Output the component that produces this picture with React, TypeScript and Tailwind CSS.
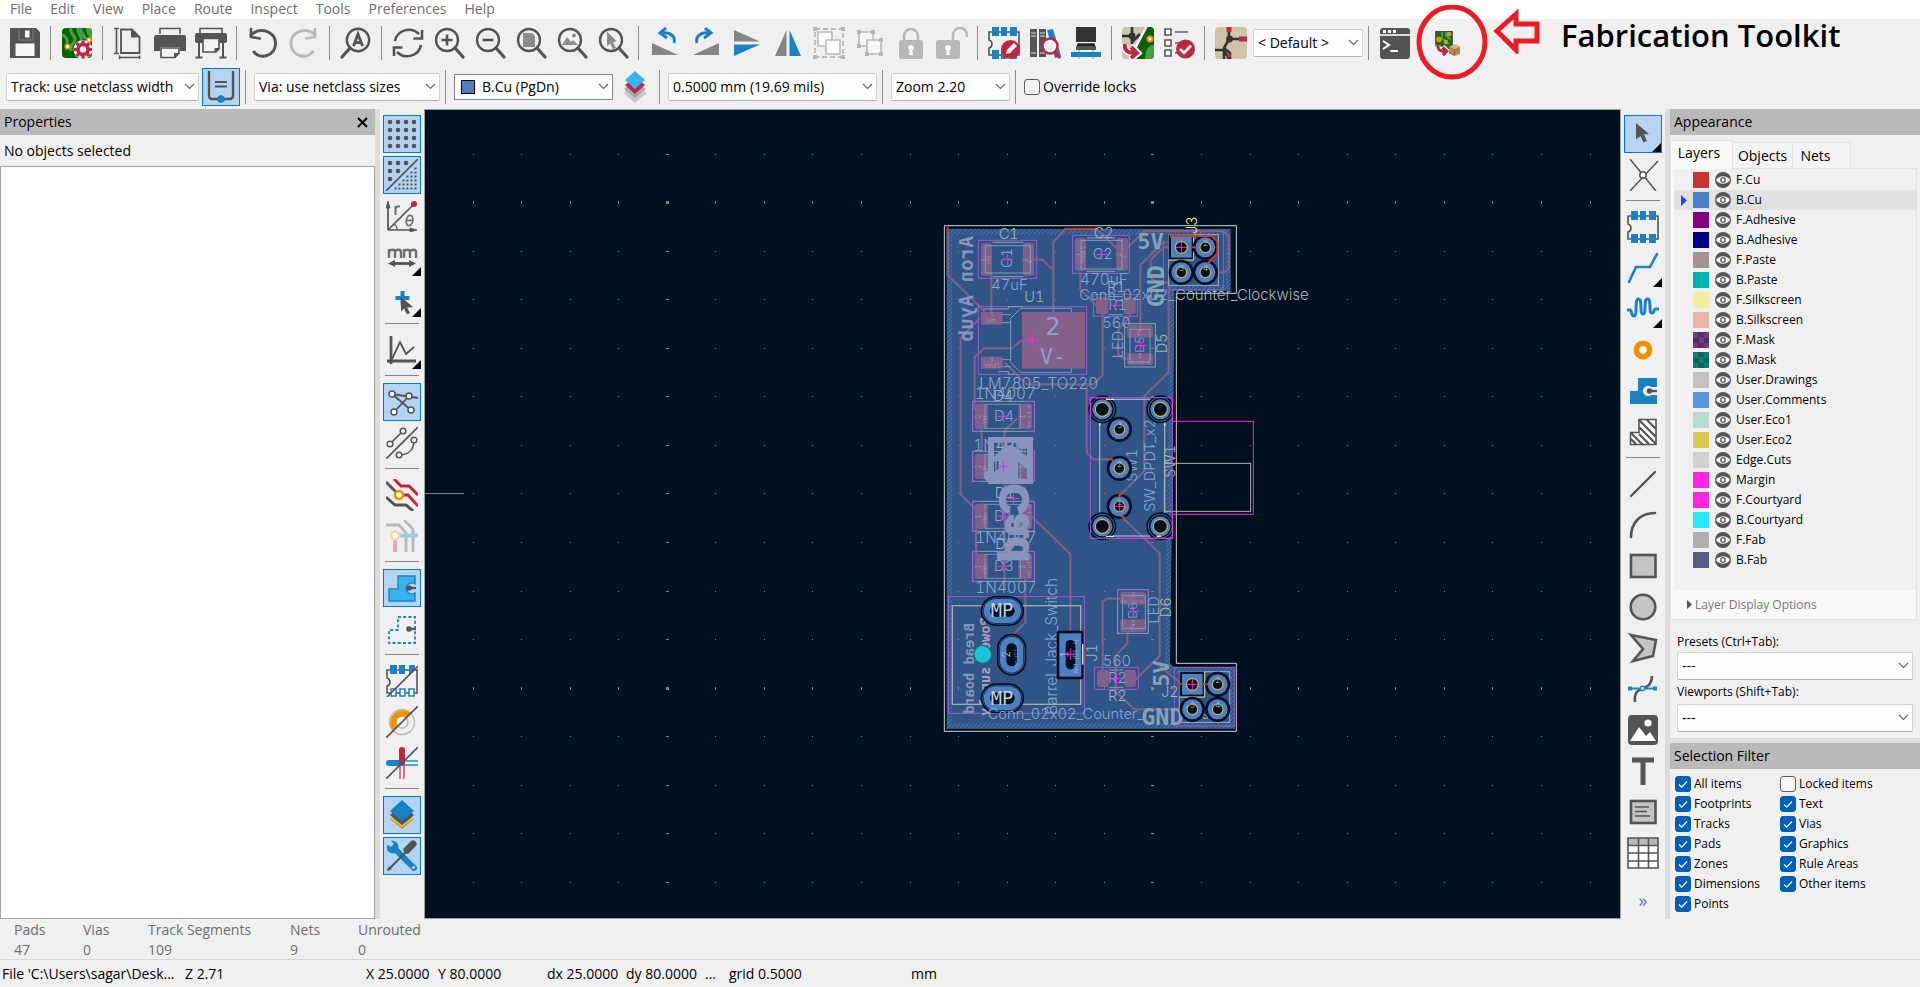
import React from "react";

type Kids = { children?: React.ReactNode };

const G = "#545454";
const B = "#1a81c4";
const R = "#bf2641";

function Icon({ children, size = 32 }: Kids & { size?: number }) {
  return (
    <svg width={size} height={size} viewBox="0 0 32 32" fill="none" aria-hidden="true" className="shrink-0">
      {children}
    </svg>
  );
}

/* ---------- top toolbar icons ---------- */

const Lens = ({ children }: Kids) => (
  <Icon>
    <circle cx="14" cy="13" r="11" stroke={G} strokeWidth="2.4" />
    <path d="M22 21l8 9" stroke={G} strokeWidth="3.2" strokeLinecap="round" />
    {children}
  </Icon>
);

const Save = () => (
  <Icon>
    <path d="M1 1h26l4 4v26H1z" fill={G} />
    <path d="M11 1h12v11H11z" fill={G} />
    <path d="M16 3.500h4.500v7H16zM6.500 16.500h19V29h-19z" fill="#f8f8f8" />
    <path d="M10 2v11h14V2" stroke="#8a8a8a" strokeWidth="0.800" />
  </Icon>
);
const BoardSetup = () => (
  <Icon>
    <rect x="1" y="1" width="30" height="30" rx="4" fill="#006400" />
    <path d="M10 1c-2 6 5 7 4 12-1 4-6 5-4 11M20 1c-2 4 4 6 4 11M1 8c4 1 6 5 5 9M17 1c-1 6 5 8 3 13" stroke="#4a9c4a" strokeWidth="3" />
    <path d="M25 1h3a3 3 0 0 1 3 3v7c-4-1-6-5-6-10z" fill="#4a9c4a" />
    <circle cx="6.500" cy="19.500" r="2.300" fill="#fff" stroke="#f29100" strokeWidth="1.600" />
    <circle cx="28" cy="13" r="2.200" fill="#fff" stroke="#f29100" strokeWidth="1.600" />
    <circle cx="22" cy="22.500" r="9.500" fill="#e8e8e8" />
    <circle cx="22" cy="22.500" r="5" stroke={R} strokeWidth="3.600" />
    <path d="M22 13.500v3M22 28.500v3M13 22.500h3M28 22.500h3M15.700 16.200l2 2M26.300 26.800l2 2M15.700 28.800l2-2M26.300 18.200l2-2" stroke={R} strokeWidth="3.200" />
  </Icon>
);
const PageSetup = () => (
  <Icon>
    <path d="M8 2.500h11l7.500 7.500V26H8z" stroke={G} strokeWidth="1.800" />
    <path d="M18 2v8.500h8z" fill={G} />
    <path d="M3.500 2v24M1 1.500h5M1 26.500h5M7 30.500h19M6.500 28.500v3.500M26.500 28.500v3.500" stroke={G} strokeWidth="1.600" />
  </Icon>
);
const Print = () => (
  <Icon>
    <path d="M6 7V1.500h20V7" stroke={G} strokeWidth="1.600" />
    <path d="M0 10a2 2 0 0 1 2-2h28a2 2 0 0 1 2 2v14h-6v-4H6v4H0z" fill={G} />
    <path d="M7 21h18v5l-4 4.500H7z" stroke={G} strokeWidth="1.600" fill="#f4f4f4" />
    <path d="M20 31v-5h6z" fill={G} />
  </Icon>
);
const Plot = () => (
  <Icon>
    <path d="M5 6V1.500h22V6" stroke={G} strokeWidth="1.600" />
    <path d="M0 8a2 2 0 0 1 2-2h28a2 2 0 0 1 2 2v6a2 2 0 0 1-2 2H2a2 2 0 0 1-2-2z" fill={G} />
    <path d="M8 11.500h16V22l-3 3H8z" fill="#f4f4f4" stroke={G} strokeWidth="1.600" />
    <path d="M19.500 26v-5H25z" fill={G} />
    <path d="M4 16v14M28 16v14M0.500 30.500h7M24.500 30.500h7" stroke={G} strokeWidth="2" />
  </Icon>
);
const Undo = () => (
  <Icon>
    <path d="M4 8C14-1 29 5 28.500 17 28 29 13 33 7 25" stroke={G} strokeWidth="3" strokeLinecap="round" />
    <path d="M4 2v8l9 1.500" stroke={G} strokeWidth="2.600" strokeLinecap="round" />
  </Icon>
);
const Redo = () => (
  <Icon>
    <path d="M27 8C17-1 2.500 5 3 17c.5 12 15.500 16 21.500 8" stroke="#bababa" strokeWidth="3" strokeLinecap="round" />
    <path d="M27 2v8l-9 1.500" stroke="#bababa" strokeWidth="2.600" strokeLinecap="round" />
  </Icon>
);
const Find = () => (
  <Icon>
    <circle cx="18" cy="13" r="11.200" stroke={G} strokeWidth="2.400" />
    <path d="M10 21l-8 9" stroke={G} strokeWidth="3.200" strokeLinecap="round" />
    <path d="M13.500 19L18 7l4.500 12M15 15.500h6" stroke={G} strokeWidth="2.800" />
  </Icon>
);
const Refresh = () => (
  <Icon>
    <path d="M3 14C5 3 19-1 27 7" stroke={G} strokeWidth="2.600" />
    <path d="M30 3v8.500h-8.500" stroke={G} strokeWidth="2.600" />
    <path d="M29 18c-2 11-16 15-24 7" stroke={G} strokeWidth="2.600" />
    <path d="M2 29v-8.500h8.500" stroke={G} strokeWidth="2.600" />
  </Icon>
);
const ZoomIn = () => <Lens><path d="M14 7.500v11M8.500 13h11" stroke={G} strokeWidth="2.600" /></Lens>;
const ZoomOut = () => <Lens><path d="M8.500 13h11" stroke={G} strokeWidth="2.600" /></Lens>;
const ZoomFit = () => <Lens><path d="M8 6h9l3 3v11H8z" fill="#8c8c8c" /></Lens>;
const ZoomObj = () => (
  <Lens>
    <path d="M6 18l5-8 4 5 2-2 5 5z" fill="#8c8c8c" />
    <circle cx="18" cy="8.500" r="2" fill="#8c8c8c" />
  </Lens>
);
const ZoomSel = () => <Lens><path d="M10 4.500l10 10-4 .5 3 6-3 1.500-3-6-3 3z" fill="#8c8c8c" /></Lens>;

const RotCCW = () => (
  <Icon>
    <path d="M3 16l26 12H3z" fill="#858585" />
    <path d="M25 16c2-7-4-11-12-10" stroke={B} strokeWidth="3" />
    <path d="M17 1l-6 5 7 5" stroke={B} strokeWidth="3" />
  </Icon>
);
const RotCW = () => (
  <Icon>
    <path d="M29 16L3 28h26z" fill="#858585" />
    <path d="M7 16C5 9 11 5 19 6" stroke={B} strokeWidth="3" />
    <path d="M15 1l6 5-7 5" stroke={B} strokeWidth="3" />
  </Icon>
);
const FlipV = () => (
  <Icon>
    <path d="M3 3l26 11.500H3z" fill="#858585" />
    <path d="M3 29l26-11.500H3z" fill={B} />
  </Icon>
);
const FlipH = () => (
  <Icon>
    <path d="M14.500 3v26H3z" fill="#858585" />
    <path d="M17.500 3v26H29z" fill={B} />
  </Icon>
);
const Group = () => (
  <Icon>
    <rect x="2" y="2" width="28" height="28" stroke="#bababa" strokeWidth="1.800" strokeDasharray="5 3" />
    <path d="M0 0h4v4H0zM28 0h4v4h-4zM0 28h4v4H0zM28 28h4v4h-4z" fill="#b5b5b5" />
    <path d="M5 5h14v14H5z" fill="#fff" stroke="#bababa" strokeWidth="1.600" />
    <path d="M13 13h14v14H13z" fill="#fff" stroke="#bababa" strokeWidth="1.600" />
  </Icon>
);
const Ungroup = () => (
  <Icon>
    <path d="M5 5h14v14H5z" fill="#f7f7f7" stroke="#bababa" strokeWidth="1.600" />
    <path d="M13 13h14v14H13z" fill="#f7f7f7" stroke="#bababa" strokeWidth="1.600" />
    <path d="M3 3h4v4H3zM17 3h4v4h-4zM3 17h4v4H3zM25 11h4v4h-4zM11 25h4v4h-4zM25 25h4v4h-4z" fill="#b5b5b5" />
  </Icon>
);
const Lock = () => (
  <Icon>
    <path d="M9 14V9a7 7 0 0 1 14 0v5" stroke="#b8b8b8" strokeWidth="2.600" />
    <rect x="4" y="13" width="24" height="19" rx="2.500" fill="#b8b8b8" />
    <circle cx="16" cy="21" r="2.800" fill="#fff" />
    <path d="M15 22h2l1 6h-4z" fill="#fff" />
  </Icon>
);
const Unlock = () => (
  <Icon>
    <path d="M17 14V8a7 7 0 0 1 14 0v2" stroke="#b8b8b8" strokeWidth="2.600" />
    <rect x="0" y="13" width="24" height="19" rx="2.500" fill="#b8b8b8" />
    <circle cx="12" cy="21" r="2.800" fill="#fff" />
    <path d="M11 22h2l1 6h-4z" fill="#fff" />
  </Icon>
);

const ChipBody = () => (
  <>
    <path d="M1 5h30v23H1v-7c4-1 4-7 0-8z" stroke={G} strokeWidth="1.600" />
    <path d="M4 0h7v9H4zM13 0h6v9h-6zM22 0h7v9h-7zM4 23h7v9H4zM13 23h6v9h-6zM22 23h7v9h-7z" fill={B} />
  </>
);
const FpEdit = () => (
  <Icon>
    <ChipBody />
    <circle cx="22.500" cy="22.500" r="9.500" fill={R} />
    <path d="M18 27l1-4 7-7 3 3-7 7z" fill="#fff" />
  </Icon>
);
const FpLib = () => (
  <Icon>
    <path d="M1 2h7v28H1zM10 2h7v28h-7z" fill={G} />
    <path d="M2 6h5M2 9h5M2 26h5M11 6h5M11 9h5M11 26h5" stroke="#ddd" strokeWidth="1.200" />
    <path d="M18 3l6-1 8 27-6 2z" fill={B} />
    <circle cx="21" cy="19" r="7.500" fill="#eaf2f8" stroke={R} strokeWidth="2.400" />
    <path d="M26 25l5 6" stroke={R} strokeWidth="3.200" />
  </Icon>
);
const View3d = () => (
  <Icon>
    <path d="M6 0h20v15H6z" fill="#333" />
    <path d="M7.500 16h17v4h-17zM6 19h20v4H6z" fill={G} />
    <path d="M9 23v9M23 23v9" stroke="#c4c4c4" strokeWidth="2" />
    <path d="M1 25h30v5H1z" fill={B} />
    <path d="M7 18h18" stroke="#222" strokeWidth="2" />
  </Icon>
);
const UpdatePcb = () => (
  <Icon>
    <rect x="0" y="0" width="32" height="32" rx="4" fill="#cfc3aa" />
    <path d="M28 0a4 4 0 0 1 4 4v24a4 4 0 0 1-4 4H12L24 0z" fill="#006400" />
    <path d="M32 18c-6 0-9 6-9 14h5a4 4 0 0 0 4-4z" fill="#4a9c4a" />
    <path d="M0 9h10M10 0v17M10 15l8-8" stroke="#333" strokeWidth="2.600" />
    <circle cx="10" cy="9" r="3.400" fill="#333" />
    <path d="M25 0L8 32" stroke="#fff" strokeWidth="3.600" />
    <path d="M26.500 0L9.500 32" stroke="#333" strokeWidth="1.400" />
    <circle cx="28" cy="12" r="2.600" fill="#fff" stroke="#f29100" strokeWidth="2" />
    <path d="M3 17c-1 7 3 9 10 9M9 19l7 7-7 6" stroke="#fff" strokeWidth="6.500" />
    <path d="M3 17c-1 7 3 9 11 9M9 20l6 6-6 5" stroke={R} strokeWidth="4" />
  </Icon>
);
const Drc = () => (
  <Icon>
    <path d="M2 2h6v6H2zM2 13h6v6H2zM2 23h6v6H2z" fill="#fff" stroke={G} strokeWidth="1.600" />
    <path d="M12 5h13M12 16h8M12 26h4" stroke="#858585" strokeWidth="2" />
    <circle cx="22.500" cy="22" r="9.500" fill={R} />
    <path d="M17 22l4 4 7-7.500" stroke="#fff" strokeWidth="2.600" />
  </Icon>
);
const Schematic = () => (
  <Icon>
    <rect x="0" y="0" width="32" height="32" rx="4" fill="#cfc3aa" />
    <path d="M14 4v8M14 12h12M14 12l-5 9v11M0 23h9l5 9M9 21l6 5v6" stroke="#333" strokeWidth="2.600" />
    <circle cx="14.500" cy="12" r="3.400" fill="#333" />
    <path d="M11.500 0h5v5h-5zM24 9.500h8v5h-8zM12 27h4v3h-4z" fill={R} />
  </Icon>
);
const Console = () => (
  <Icon>
    <rect x="1" y="1" width="30" height="31" rx="3" fill={G} />
    <path d="M1 8h30" stroke="#fff" strokeWidth="1.600" />
    <path d="M4 3h3v3H4zM9 3h3v3H9zM14 3h3v3h-3z" fill="#fff" />
    <path d="M4 14l6 4-6 4M11.500 24h7.500" stroke="#fff" strokeWidth="2" />
  </Icon>
);
const Fab = () => (
  <Icon size={25}>
    <rect x="1" y="0" width="21" height="24" rx="1" fill="#126b1c" stroke="#444" strokeWidth="1.600" />
    <path d="M9 1v8c0 4 8 2 8 8M14 1v5l6 5" stroke="#47a047" strokeWidth="2.400" />
    <circle cx="5" cy="11" r="3.500" fill="#f29100" />
    <circle cx="18" cy="4" r="3" fill="#e0901a" />
    <circle cx="14" cy="14" r="2.800" fill="#f29100" />
    <path d="M0 20h12l8 12H0z" fill="#f0f0f0" />
    <path d="M4 18c-1 7 3 8 10 8M10 20l6 6-6 6" stroke="#f0f0f0" strokeWidth="6" />
    <path d="M4 18c-1 7 3 8 10 8M10 21l5 5-5 5" stroke={R} strokeWidth="4" />
    <path d="M18 20l8-3 6 3v9l-7 3-7-3z" fill="#b8834a" />
    <path d="M18 20l8-3 6 3-7 3z" fill="#dcb27c" />
    <path d="M25 23v9" stroke="#8f6230" strokeWidth="1" />
  </Icon>
);
const TrackPos = () => (
  <Icon>
    <path d="M4 0v25a3 3 0 0 0 3 3h18a3 3 0 0 0 3-3V0" stroke={G} strokeWidth="2.400" />
    <path d="M10 11h12M10 15.500h12" stroke={G} strokeWidth="1.800" />
    <circle cx="16" cy="28" r="3.800" fill={B} />
  </Icon>
);
const LayerPair = () => (
  <Icon>
    <path d="M16 13l12 9-12 10L4 22z" fill="#c9c9c9" />
    <path d="M16 10l11 8-11 9-11-9z" fill="#a8a8a8" />
    <path d="M16 6l10 8-10 9-10-9z" fill={R} />
    <path d="M16 0l10 9-10 9L6 9z" fill="#39b4ea" />
  </Icon>
);

/* ---------- side toolbar icons ---------- */

const gridDots = (n: number) => Array.from({ length: n }, (_, i) => i);

const GridDots = () => (
  <Icon>
    {gridDots(4).map((r) => gridDots(4).map((c) => <circle key={`${r}-${c}`} cx={4 + c * 8} cy={4 + r * 8} r="2.300" fill={G} />))}
  </Icon>
);
const GridOverride = () => (
  <Icon>
    {[[4, 4], [12, 4], [20, 4], [4, 12], [12, 12], [4, 20]].map(([x, y]) => <circle key={`${x}-${y}`} cx={x} cy={y} r="2.300" fill={G} />)}
    <path d="M0 32L32 0" stroke={G} strokeWidth="1.600" />
    {gridDots(6).map((r) => gridDots(r + 1).map((c) => <rect key={`${r}-${c}`} x={28.500 - c * 4} y={8.500 + r * 4} width="2" height="2" fill={G} />))}
  </Icon>
);
const Polar = () => (
  <Icon>
    <path d="M2 30V4M2 30h26M2 30L27 5" stroke={G} strokeWidth="1.700" />
    <path d="M0 8l2-7 2 7zM24 28l7 2-7 2z" fill={G} stroke={G} strokeWidth="0.800" />
    <path d="M8 24c2 1 3 3 3 6" stroke={G} strokeWidth="1.200" />
    <circle cx="28" cy="4" r="3" fill={R} />
    <path d="M9.500 6v9M9.500 10c0-3 2-4 4.500-3.500" stroke="#707070" strokeWidth="2" />
    <ellipse cx="23.500" cy="20.500" rx="3.200" ry="5.200" stroke="#707070" strokeWidth="1.800" transform="rotate(12 23.500 20.500)" />
    <path d="M20.500 20.500h6" stroke="#707070" strokeWidth="1.600" />
  </Icon>
);
const Mm = () => (
  <Icon>
    <path d="M3 17V8M3 11c1-3 6-3 6 0v6M9 11c1-3 6-3 6 0v6M18 17V8M18 11c1-3 6-3 6 0v6M24 11c1-3 6-3 6 0v6" stroke="#707070" strokeWidth="2.400" />
    <path d="M7 22.500h18" stroke={G} strokeWidth="2.800" />
    <path d="M2 22.500l7-3.500v7zM30 22.500l-7-3.500v7z" fill={G} />
  </Icon>
);
const CursorPlus = () => (
  <Icon>
    <path d="M16.500 9v14M9.500 16h14" stroke={B} strokeWidth="4" />
    <path d="M15 15l12 10-6 .5 3 5.500-3 1.500-3-6-3 3z" fill={G} />
  </Icon>
);
const Ruler = () => (
  <Icon>
    <path d="M5 2v28M1 27h29" stroke={G} strokeWidth="2.800" />
    <path d="M5 27l9-19 6 12 8-7" stroke={G} strokeWidth="1.800" />
  </Icon>
);
const Ratsnest = () => (
  <Icon>
    <path d="M6 8l26 4M6 8l19 16M23 10L8 26" stroke={G} strokeWidth="1.800" />
    {[[6, 8], [23, 10], [25, 24], [8, 26]].map(([x, y]) => <circle key={`${x}-${y}`} cx={x} cy={y} r="3" fill="#fff" stroke={G} strokeWidth="1.500" />)}
  </Icon>
);
const CurvedRats = () => (
  <Icon>
    <path d="M0 32L32 0M4 17L17 4M13 28c9 0 15-5 15-15" stroke={G} strokeWidth="1.600" />
    {[[4, 17], [17, 4], [13, 28], [28, 13]].map(([x, y]) => <circle key={`${x}-${y}`} cx={x} cy={y} r="2.800" fill="#fff" stroke={G} strokeWidth="1.500" />)}
  </Icon>
);
const TrackMode = () => (
  <Icon>
    <path d="M8 0l7 7h8l9 9M14 16h8l10 11" stroke={R} strokeWidth="3" />
    <path d="M0 3l13 13M0 18l9 8h11l7 6" stroke={G} strokeWidth="3" />
    <circle cx="13" cy="16" r="4" fill="#fff" stroke="#f29100" strokeWidth="2.600" />
  </Icon>
);
const HighContrast = () => (
  <Icon>
    <path d="M0 5h13l7 8v19M18 0l9 9v23" stroke="#b8b8b8" strokeWidth="2.800" />
    <path d="M12 15.500h20" stroke="#a3cbe8" strokeWidth="4" />
    <path d="M9 18v14" stroke="#e5a8b3" strokeWidth="4" />
    <circle cx="9" cy="15.500" r="4" fill="#fff" stroke="#fad3a0" strokeWidth="2.600" />
  </Icon>
);
const ZoneFill = () => (
  <Icon>
    <path d="M12 4h17v8a5.500 5.500 0 1 0 0 9v8H3V17h9z" fill="#39b4ea" stroke={B} strokeWidth="1.400" />
    <circle cx="23" cy="16" r="2.800" fill={G} />
    <path d="M23 16h7" stroke={G} strokeWidth="2.400" />
  </Icon>
);
const ZoneOutline = () => (
  <Icon>
    <path d="M12 4h17v26H3V17h9z" stroke={B} strokeWidth="1.800" strokeDasharray="3 2.200" />
    <circle cx="23" cy="16" r="2.800" fill={G} />
    <path d="M23 16h7" stroke={G} strokeWidth="2.400" />
  </Icon>
);
const PadSketch = () => (
  <Icon>
    <path d="M1 5h30v23H1v-7c4-1 4-7 0-8z" stroke={G} strokeWidth="1.600" />
    <path d="M4 0h7v9H4zM13 0h6v9h-6zM23 0h6v3l-5 6h-1z" fill={B} />
    <path d="M5 24h5v7H5zM14 24h5v7h-5zM23 24h5v7h-5z" fill="#fff" stroke={B} strokeWidth="1.500" />
    <path d="M1 32L32 1" stroke={G} strokeWidth="1.600" />
  </Icon>
);
const ViaSketch = () => (
  <Icon>
    <circle cx="16" cy="16" r="12.500" stroke="#b8b8b8" strokeWidth="1.400" />
    <circle cx="16" cy="16" r="6" stroke="#b8b8b8" strokeWidth="1.400" />
    <path d="M7 25A12.800 12.800 0 0 1 25 7l-5 5a5.500 5.500 0 0 0-8 8z" fill="#f29100" />
    <path d="M0 32L32 0" stroke={G} strokeWidth="1.600" />
  </Icon>
);
const TrackSketch = () => (
  <Icon>
    <path d="M16 14h16M16 18h16" stroke="#5ea5d6" strokeWidth="1.800" />
    <path d="M14 16v16M18 16v16" stroke="#cf6a7c" strokeWidth="1.800" />
    <path d="M3 16h13" stroke={B} strokeWidth="6" strokeLinecap="round" />
    <path d="M16 3v12" stroke={R} strokeWidth="6" strokeLinecap="round" />
    <path d="M0 32L32 0" stroke={G} strokeWidth="1.600" />
  </Icon>
);
const Layers = () => (
  <Icon>
    <path d="M16 10l12 10-12 10L4 20z" fill="#f29100" />
    <path d="M16 6l12 10-12 10L4 16z" fill={G} />
    <path d="M4 18l12 9 12-9" stroke="#b3d5f3" strokeWidth="1" />
    <path d="M16 1l12 11-12 10L4 12z" fill={B} />
  </Icon>
);
const Tools = () => (
  <Icon>
    <path d="M8 8l20 20" stroke={B} strokeWidth="6" strokeLinecap="round" />
    <path d="M5 1c5-1 9 4 7 9s-8 4-11 0V5l5 2 2-3z" fill={B} />
    <circle cx="27.500" cy="27.500" r="1.300" fill="#fff" />
    <path d="M2 30L20 12" stroke={G} strokeWidth="2" />
    <path d="M1 31l5-2-3-3z" fill={G} />
    <path d="M21 10l6-6" stroke={G} strokeWidth="7" strokeLinecap="round" />
  </Icon>
);

const Arrow = () => <Icon><path d="M9 5l13 11-5 .5 3 6.500-3.500 1.500-3-6.500L9 21.500z" fill={G} /></Icon>;
const LocalRats = () => (
  <Icon>
    <path d="M3 0l26 32M31 2L3 32" stroke={G} strokeWidth="1.500" />
    <circle cx="16" cy="16" r="3.200" fill="#fff" stroke={G} strokeWidth="1.500" />
  </Icon>
);
const AddFp = () => <Icon><ChipBody /></Icon>;
const Route = () => <Icon><path d="M2 30l7-15h14l7-13" stroke={B} strokeWidth="2.600" strokeLinecap="round" /></Icon>;
const Tune = () => <Icon><path d="M0 17h3c2 0 1 6 4 6 4 0 0-17 4.500-17S12 21 16 21s0-15 4.500-15S21 20 25 20c3 0 1-4 4-4h3" stroke={B} strokeWidth="3" /></Icon>;
const Via = () => <Icon><circle cx="16" cy="16" r="6.600" fill="#fff" stroke="#f29100" strokeWidth="5.600" /></Icon>;
const Zone = () => (
  <Icon>
    <path d="M11 3h19v26H3V16h8z" fill={B} />
    <path d="M30 12h-6a5 5 0 1 0 0 8h6z" fill="#f0f0f0" />
    <circle cx="22.500" cy="16" r="2.800" fill={G} />
    <path d="M22 16h8" stroke={G} strokeWidth="2.400" />
  </Icon>
);
const RuleArea = () => (
  <Icon>
    <path d="M12 3.500h17v25H3.500v-12H12z" fill="#fff" stroke={G} strokeWidth="1.600" />
    <path d="M12 4l17 17M12 11l17 17M12 18l10 10M4 17l12 12M4 23l5 5M20 4l9 9" stroke={G} strokeWidth="2.200" />
  </Icon>
);
const LineI = () => <Icon><path d="M4 28L28 4" stroke={G} strokeWidth="2.400" strokeLinecap="round" /></Icon>;
const ArcI = () => <Icon><path d="M4 28C4 14 13 4 28 4" stroke={G} strokeWidth="2.600" strokeLinecap="round" /></Icon>;
const RectI = () => <Icon><rect x="4" y="5" width="24.500" height="22" fill="#c4c4c4" stroke={G} strokeWidth="2.600" /></Icon>;
const CircleI = () => <Icon><circle cx="16" cy="16" r="12.300" fill="#c4c4c4" stroke={G} strokeWidth="2.600" /></Icon>;
const PolyI = () => <Icon><path d="M4 3l25 5-3 16L6 29l10-12z" fill="#c4c4c4" stroke={G} strokeWidth="2.600" /></Icon>;
const BezierI = () => (
  <Icon>
    <path d="M8 29c-2-20 16-7 17-26" stroke={G} strokeWidth="2.600" />
    <path d="M3 15.500h26" stroke={B} strokeWidth="2" />
    <path d="M1 13.500h4v4H1zM26 13.500h4v4h-4z" fill={B} />
    <circle cx="15.500" cy="15.500" r="2.200" fill="#fff" stroke={B} strokeWidth="1.500" />
  </Icon>
);
const ImageI = () => (
  <Icon>
    <rect x="1" y="1" width="30" height="30" rx="4" fill={G} />
    <path d="M3 27l9-14 7 9 4-4 6 9z" fill="#fff" />
    <circle cx="21" cy="9" r="3.600" fill="#fff" />
  </Icon>
);
const TextI = () => <Icon><path d="M5 5h22M16 5v25" stroke={G} strokeWidth="5" /></Icon>;
const TextBoxI = () => (
  <Icon>
    <rect x="4" y="5" width="24.500" height="22" fill="#c4c4c4" stroke={G} strokeWidth="2.600" />
    <path d="M8 11h14M8 15.500h12M8 20h15" stroke={G} strokeWidth="1.500" />
  </Icon>
);
const TableI = () => (
  <Icon>
    <path d="M1 1h30v30H1z" fill="#fff" />
    <path d="M1 1h30v7H1z" fill="#b8b8b8" />
    <path d="M1 1h30v30H1zM1 8.500h30M1 16h30M1 24h30M11.500 1v30M21.500 1v30" stroke={G} strokeWidth="1.600" />
  </Icon>
);

/* ---------- toolbar building blocks ---------- */

type Tool = { n: string; i: () => React.ReactElement; on?: boolean; menu?: boolean } | null;

const topTools: Tool[] = [
  { n: "Save", i: Save }, null,
  { n: "Board Setup", i: BoardSetup }, null,
  { n: "Page Settings", i: PageSetup }, { n: "Print", i: Print }, { n: "Plot", i: Plot }, null,
  { n: "Undo", i: Undo }, { n: "Redo", i: Redo }, null,
  { n: "Find", i: Find }, null,
  { n: "Refresh", i: Refresh }, { n: "Zoom In", i: ZoomIn }, { n: "Zoom Out", i: ZoomOut }, { n: "Zoom to Fit", i: ZoomFit },
  { n: "Zoom to Objects", i: ZoomObj }, { n: "Zoom to Selection", i: ZoomSel }, null,
  { n: "Rotate Counterclockwise", i: RotCCW }, { n: "Rotate Clockwise", i: RotCW }, { n: "Mirror Vertically", i: FlipV },
  { n: "Mirror Horizontally", i: FlipH }, { n: "Group", i: Group }, { n: "Ungroup", i: Ungroup }, { n: "Lock", i: Lock }, { n: "Unlock", i: Unlock }, null,
  { n: "Footprint Editor", i: FpEdit }, { n: "Footprint Library", i: FpLib }, { n: "3D Viewer", i: View3d }, null,
  { n: "Update PCB", i: UpdatePcb }, { n: "Design Rules Checker", i: Drc }, null,
  { n: "Schematic Editor", i: Schematic },
];

const leftTools: Tool[] = [
  { n: "Show Grid", i: GridDots, on: true }, { n: "Grid Overrides", i: GridOverride, on: true }, { n: "Polar Coordinates", i: Polar },
  { n: "Millimeters", i: Mm, menu: true }, { n: "Crosshairs", i: CursorPlus, menu: true }, null,
  { n: "Line Modes", i: Ruler, menu: true }, null,
  { n: "Show Ratsnest", i: Ratsnest, on: true }, { n: "Curved Ratsnest", i: CurvedRats }, null,
  { n: "Contrast Mode", i: TrackMode }, { n: "Net Highlight", i: HighContrast }, null,
  { n: "Filled Zones", i: ZoneFill, on: true }, { n: "Zone Outlines", i: ZoneOutline }, null,
  { n: "Sketch Pads", i: PadSketch }, { n: "Sketch Vias", i: ViaSketch }, { n: "Sketch Tracks", i: TrackSketch }, null,
  { n: "Appearance Manager", i: Layers, on: true }, { n: "Properties Manager", i: Tools, on: true },
];

const rightTools: Tool[] = [
  { n: "Select", i: Arrow, on: true, menu: true }, { n: "Local Ratsnest", i: LocalRats }, null,
  { n: "Place Footprint", i: AddFp }, { n: "Route Track", i: Route, menu: true }, { n: "Tune Length", i: Tune, menu: true },
  { n: "Place Via", i: Via }, { n: "Draw Zone", i: Zone }, { n: "Rule Area", i: RuleArea }, null,
  { n: "Draw Line", i: LineI }, { n: "Draw Arc", i: ArcI }, { n: "Draw Rectangle", i: RectI }, { n: "Draw Circle", i: CircleI },
  { n: "Draw Polygon", i: PolyI }, { n: "Draw Bezier", i: BezierI }, { n: "Place Image", i: ImageI }, { n: "Place Text", i: TextI },
  { n: "Text Box", i: TextBoxI }, { n: "Table", i: TableI },
];

const VSep = () => (
  <div className="flex w-[11px] shrink-0 justify-center">
    <div className="h-[34px] w-px bg-[#8c8c8c]" />
  </div>
);

const TopButton = ({ n, i: I }: { n: string; i: () => React.ReactElement }) => (
  <button aria-label={n} className="flex h-[41px] w-[41px] shrink-0 items-center justify-center"><I /></button>
);

function SideBar({ tools, children }: Kids & { tools: Tool[] }) {
  return (
    <div className="flex w-[44px] shrink-0 flex-col items-center bg-[#f0f0f0] pt-1">
      {tools.map((t, k) =>
        t ? (
          <div key={t.n} className="flex h-[41px] items-center">
            <button
              aria-label={t.n}
              className={
                t.on
                  ? "relative flex h-[38px] w-[38px] items-center justify-center border border-[#0078d7] bg-[#b3d5f3]"
                  : "relative flex h-[38px] w-[38px] items-center justify-center"
              }
            >
              <t.i />
              {t.menu && (
                <svg width="9" height="9" className="absolute right-0 bottom-0" aria-hidden="true"><path d="M9 0v9H0z" fill="#000" /></svg>
              )}
            </button>
          </div>
        ) : (
          <div key={k} className="flex h-[11px] w-[34px] items-center"><div className="h-px w-full bg-[#858585]" /></div>
        )
      )}
      {children}
    </div>
  );
}

const Chevron = () => (
  <svg width="11" height="7" viewBox="0 0 11 7" fill="none" className="pointer-events-none absolute top-1/2 right-1 -mt-1" aria-hidden="true">
    <path d="M1 1l4.500 4.500L10 1" stroke="#666" strokeWidth="1.100" />
  </svg>
);

function Pick({ id, label, value, box, dark, swatch }: { id: string; label: string; value: string; box: string; dark?: boolean; swatch?: boolean }) {
  return (
    <div className={`relative ${box}`}>
      <select
        id={id}
        aria-label={label}
        className={`h-full w-full appearance-none bg-[#fdfdfd] text-sm ${swatch ? "pl-[27px]" : "pl-1"} ${
          dark ? "border border-[#868686]" : "rounded-[2px] border border-[#d0d0d0] border-b-[#b0b0b0]"
        }`}
      >
        <option>{value}</option>
      </select>
      {swatch && <span className="pointer-events-none absolute top-[6px] left-[7px] h-[14px] w-[14px] border border-black bg-[#4d7fc4]" />}
      <Chevron />
    </div>
  );
}

/* ---------- board ---------- */

const THIN = "Inter, 'Open Sans', sans-serif";
const BOLD = "'DejaVu Sans Mono', monospace";

function T({ x, y, s = 44, c = "#86a7cf", r, children }: Kids & { x: number; y: number; s?: number; c?: string; r?: boolean }) {
  return (
    <text
      x={x}
      y={y}
      fontSize={s}
      fill={c}
      fontFamily={THIN}
      fontWeight={300}
      className="[font-feature-settings:'calt'_0,'tnum'_1]"
      transform={r ? `rotate(-90 ${x} ${y})` : undefined}
    >
      {children}
    </text>
  );
}

function Mirror({ x, y, s, c = "#8a93bd", children, thick }: Kids & { x: number; y: number; s: number; c?: string; thick?: boolean }) {
  return (
    <text
      transform={`matrix(0 1 1 0 ${x} ${y})`}
      fontSize={s}
      fill={c}
      stroke={thick ? c : undefined}
      strokeWidth={thick ? 7 : undefined}
      fontWeight={700}
      fontFamily={thick ? "'Liberation Sans', sans-serif" : BOLD}
    >
      {children}
    </text>
  );
}

const Pad = ({ x, y, w, h }: { x: number; y: number; w: number; h: number }) => <rect x={x} y={y} width={w} height={h} rx="8" fill="#7e6089" />;

const Cross = ({ x, y }: { x: number; y: number }) => <path d={`M${x - 17} ${y}h34M${x} ${y - 17}v34`} stroke="#ff26e2" strokeWidth="3" />;

const Box = ({ x, y, w, h, c = "#9a5ad2", k = 3 }: { x: number; y: number; w: number; h: number; c?: string; k?: number }) => (
  <rect x={x} y={y} width={w} height={h} stroke={c} strokeWidth={k} fill="none" />
);

function Hole({ x, y, big, label }: { x: number; y: number; big?: boolean; label?: string }) {
  return (
    <g>
      <circle cx={x} cy={y} r={big ? 42 : 38} fill="#000f20" />
      {big && <circle cx={x} cy={y} r="36" fill="none" stroke="#4d7fc4" strokeWidth="2.500" />}
      <circle cx={x} cy={y} r="30" fill="#4d7fc4" />
      <circle cx={x} cy={y} r={big ? 21 : 16} fill="#000f20" stroke="#d8b13a" strokeWidth="3.500" />
      {label && <T x={x - 7} y={y - 4} s={24} c="#b9c7dd">{label}</T>}
    </g>
  );
}

function SquarePad({ x, y }: { x: number; y: number }) {
  return (
    <g>
      <rect x={x - 38} y={y - 38} width="76" height="76" fill="#000f20" />
      <rect x={x - 31} y={y - 31} width="62" height="62" fill="#4d7fc4" />
      <circle cx={x} cy={y} r="18" fill="#000f20" stroke="#d8b13a" strokeWidth="3.500" />
      <path d={`M${x - 38} ${y + 38}h75v-76`} stroke="#f2eda1" strokeWidth="3" fill="none" />
      <Cross x={x} y={y} />
    </g>
  );
}

function Slot({ x, y, w, h }: { x: number; y: number; w: number; h: number }) {
  const m = Math.min(w, h) / 2;
  return (
    <g>
      <rect x={x - w / 2 - 9} y={y - h / 2 - 9} width={w + 18} height={h + 18} rx={m + 9} fill="#000f20" />
      <rect x={x - w / 2 - 3} y={y - h / 2 - 3} width={w + 6} height={h + 6} rx={m + 3} fill="none" stroke="#4d7fc4" strokeWidth="2" />
      <rect x={x - w / 2} y={y - h / 2} width={w} height={h} rx={m} fill="#4d7fc4" />
      <rect x={x - w / 2 + 19} y={y - h / 2 + 19} width={w - 38} height={h - 38} rx={m - 19} fill="#000f20" />
    </g>
  );
}

function Diode({ y, name, left, right }: { y: number; name: string; left: string; right: string }) {
  return (
    <g>
      <Pad x={134} y={y - 38} w={40} h={76} />
      <Pad x={265} y={y - 38} w={41} h={76} />
      <rect x="165" y={y - 36} width="107" height="72" stroke="#7d9dc3" strokeWidth="2.500" fill="none" />
      <Box x={128} y={y - 45} w={185} h={90} c="#8aa5b0" />
      <path d={`M150 ${y - 45}H128v90h22M290 ${y - 45}h23v90h-23`} stroke="#9a5ad2" strokeWidth="3" fill="none" />
      <T x={192} y={y + 15}>{name}</T>
      <T x={153} y={y + 8} s={22} r c="#a79cc4">{left}</T>
      <T x={172} y={y + 24} s={18} r c="#a79cc4">Vin</T>
      <T x={284} y={y + 8} s={22} r c="#a79cc4">{right}</T>
      <T x={303} y={y + 36} s={13} r c="#a79cc4">Net-(D1-A)</T>
    </g>
  );
}

const GRID_X = Array.from({ length: 24 }, (_, i) => ({ p: Math.round(473.500 + i * 48.570) - 0.500, major: i % 10 === 4 }));
const GRID_Y = Array.from({ length: 17 }, (_, i) => ({ p: Math.round(154.500 + i * 48.570) - 0.500, major: i % 10 === 1 }));

function Board() {
  return (
    <svg viewBox="425 110 1195 808" preserveAspectRatio="xMidYMid slice" className="absolute inset-0 h-full w-full" fill="none" role="img" aria-label="Board layout">
      <defs>
        <pattern id="hatch" width="9" height="9" patternUnits="userSpaceOnUse" patternTransform="rotate(45)">
          <rect width="9" height="9" fill="#2f5485" />
          <rect width="3" height="9" fill="#4573b2" />
        </pattern>
      </defs>
      <g transform="translate(930 210) scale(0.33333)">
        <path d="M50 57H902V242H733V350L720 1360L733 1372H915V1556H50z" fill="url(#hatch)" />
        <path d="M66 74H886V226H716V460L704 1388H900V1540H66z" fill="#2f5485" />
      </g>
      {GRID_X.map((gx) =>
        GRID_Y.map((gy) => (
          <rect
            key={`${gx.p}-${gy.p}`}
            x={gx.p - (gx.major ? 1.500 : 0.500)}
            y={gy.p - (gy.major ? 1.500 : 0.500)}
            width={gx.major ? 3 : 1}
            height={gy.major ? 3 : 1}
            fill="#858585"
          />
        ))
      )}
      <path d="M425 493.500h39" stroke="#858a92" strokeWidth="1" />

      <g transform="translate(930 210) scale(0.33333)">
        <path d="M43 47H919V250H739V1360H919V1564H43z" stroke="#d0d2cd" strokeWidth="3" />

        <g stroke="#7e6089" strokeWidth="6.500" strokeLinejoin="round">
          <path d="M53 57V195L165 305M184 195V310M312 149H338L370 180V310M370 180V96L405 57H500L560 115M590 115L645 63H880L897 80V175L885 187H840" />
          <path d="M451 185V238L500 288M518 310V495L490 523H290L225 458M150 325L92 383V853L138 900V1040M275 391L246 415H163L134 442V600M262 625L224 662V1140M155 650V720M284 830V900M306 920L421 1032V1270M286 1100V1237L245 1278" />
          <path d="M600 310V320L565 358V432L580 445H600M631 350V165L700 97H720M720 112H700L662 150V200L680 218H716V487L643 558V783L568 857M470 528V727L490 748H545M575 920L689 1030V1338L610 1415M518 1390V1175L530 1166H580M592 1265V1300L557 1337V1445L613 1498H770M670 1352L752 1420" />
          <path d="M224 662V860M284 700V760" />
        </g>
        <g stroke="#c8322e" strokeWidth="6">
          <path d="M405 56H505M53 50V64M421 1262v10M258 1268l-14 14" />
        </g>

        {/* C1, C2 */}
        <Pad x={153} y={99} w={33} h={98} /><Pad x={279} y={99} w={33} h={98} />
        <Box x={166} y={107} w={135} h={82} c="#7d9dc3" />
        <path d="M188 97H280M188 200H280" stroke="#8aa5b0" strokeWidth="3" />
        <Box x={145} y={91} w={175} h={114} />
        <T x={206} y={88} c="#9bb4bd">C1</T><T x={246} y={174} r>C1</T><T x={184} y={241}>47uF</T>
        <T x={168} y={156} s={20} r c="#a79cc4">1</T><T x={184} y={165} s={18} r c="#a79cc4">Vin</T>
        <T x={291} y={156} s={20} r c="#a79cc4">2</T><T x={307} y={160} s={18} r c="#a79cc4">V-</T>
        <Pad x={435} y={84} w={33} h={98} /><Pad x={559} y={84} w={36} h={98} />
        <Box x={453} y={91} w={123} h={86} c="#7d9dc3" />
        <path d="M470 84H556M470 184H556" stroke="#8aa5b0" strokeWidth="3" />
        <Box x={428} y={76} w={170} h={114} />
        <T x={491} y={84} c="#9bb4bd">C2</T><T x={488} y={148}>C2</T><T x={450} y={226} s={46}>470uF</T>
        <T x={450} y={140} s={20} r c="#a79cc4">1</T><T x={464} y={158} s={18} r c="#a79cc4">Vout1</T>
        <T x={574} y={140} s={20} r c="#a79cc4">2</T><T x={590} y={144} s={18} r c="#a79cc4">V-</T>

        {/* U1 */}
        <Box x={145} y={290} w={325} h={203} />
        <path d="M160 297H235V290H280M205 485H235V493H255" stroke="#8aa5b0" strokeWidth="3" />
        <path d="M217 314H242M217 338H242M217 449H242M217 470H242M272 295H424V487H272L242 457V325z" stroke="#7d9dc3" strokeWidth="3" />
        <rect x="276" y="306" width="189" height="170" fill="#84618a" />
        <rect x="153" y="306" width="65" height="38" fill="#84618a" /><rect x="153" y="440" width="65" height="36" fill="#84618a" />
        <T x={283} y={276} c="#9bb4bd">U1</T>
        <text x="346" y="375" fontSize="76" fontFamily={BOLD} fill="#8b9fd0">2</text>
        <text x="330" y="462" fontSize="64" fontFamily={BOLD} fill="#8b9fd0">V-</text>
        <T x={180} y={322} s={18} c="#a79cc4">1</T><T x={170} y={339} s={18} c="#a79cc4">Vin</T>
        <T x={180} y={456} s={18} c="#a79cc4">3</T><T x={162} y={473} s={18} c="#a79cc4">Vout1</T>
        <T x={148} y={537} s={46}>LM7805_TO220</T>
        <T x={134} y={567} s={46}>1N4007</T>
        <T x={190} y={573} c="#9bb4bd">D4</T>

        {/* R1, D5 */}
        <Pad x={498} y={262} w={37} h={50} /><Pad x={580} y={262} w={37} h={50} />
        <Box x={490} y={253} w={132} h={66} />
        <path d="M536 260H578M536 314H578" stroke="#8aa5b0" strokeWidth="3" />
        <T x={531} y={247} c="#9bb4bd">R1</T><T x={535} y={300}>R1</T><T x={517} y={354} s={44}>560</T>
        <T x={448} y={271}>Conn_02x02_</T><T x={735} y={271} s={45} c="#b4b7bb">Counter_Clockwise</T>
        <Pad x={591} y={345} w={78} h={38} /><Pad x={591} y={430} w={78} h={36} />
        <Box x={600} y={358} w={60} h={98} c="#7d9dc3" /><Box x={584} y={341} w={92} h={130} c="#8aa5b0" />
        <T x={578} y={445} r>LED</T><T x={642} y={428} s={36} r>D5</T><T x={710} y={430} c="#9bb4bd" r>D5</T>
        <T x={624} y={362} s={20} c="#a79cc4">1</T><T x={620} y={379} s={18} c="#a79cc4">V-</T>
        <T x={624} y={445} s={20} c="#a79cc4">2</T><T x={594} y={461} s={12} c="#a79cc4">Net-(D5-A)</T>

        {/* diodes */}
        <Diode y={619} name="D4" left="2" right="1" />
        <T x={130} y={722} s={46}>1N4007</T><T x={200} y={714} c="#9bb4bd">D2</T>
        <Diode y={769} name="D2" left="2" right="1" />
        <T x={194} y={865} c="#9bb4bd">D1</T>
        <Diode y={919} name="D1" left="1" right="2" />
        <T x={136} y={1000} s={46}>1N4007</T><T x={196} y={1016} c="#9bb4bd">D3</T>
        <Diode y={1069} name="D3" left="1" right="2" />
        <T x={136} y={1149} s={46}>1N4007</T>

        {/* logo and owner text on the back silkscreen */}
        <path fillRule="evenodd" d="M174 681H309V822H174zM192 698H291V716H262L240 704L218 716L192 740zM291 740L262 716V698H291zM265 756L291 776V806H265zM192 756L206 748V776L192 786z" fill="#8a93bd" />
        <circle cx="178" cy="798" r="17" fill="#8a93bd" />
        <Mirror x={293} y={822} s={124} thick>Cad</Mirror>
        <Mirror x={129} y={78} s={58}>Aron</Mirror>
        <Mirror x={129} y={255} s={58}>Ayub</Mirror>

        {/* J3 */}
        <rect x="790" y="74" width="74" height="152" fill="#2f5485" />
        <path d="M754 187H826" stroke="#4d7fc4" strokeWidth="10" />
        <Box x={716} y={74} w={149} h={152} c="#9db1b5" />
        <T x={802} y={72} s={44} r c="#f2eda1">J3</T>
        <SquarePad x={754} y={112} />
        <Hole x={826} y={112} label="2" /><Hole x={754} y={187} label="3" /><Hole x={826} y={187} label="4" />
        <path d="M720 78H845L862 95V130L833 160M785 112H800" stroke="#e0322c" strokeWidth="6" />
        <path d="M700 240V90M880 60V240H700" stroke="#9a5ad2" strokeWidth="3" />
        <text x="622" y="118" fontSize="66" fontWeight="700" fontFamily={BOLD} fill="#86a3b4">5V</text>
        <text x="703" y="292" fontSize="70" fontWeight="700" fontFamily={BOLD} fill="#86a3b4" transform="rotate(-90 703 292)">GND</text>

        {/* SW1 */}
        <T x={620} y={815} r>SW1</T><T x={676} y={905} r>SW_DPDT_x2</T><T x={734} y={803} r c="#a9bab0">SW1</T>
        <Box x={509} y={568} w={195} h={410} c="#9db1b5" k={4} />
        <Box x={703} y={760} w={259} h={144} c="#afafaf" />
        <path d="M727 634H970V913H727" stroke="#ff26e2" strokeWidth="3" />
        <Hole x={517} y={598} big /><Hole x={691} y={598} big /><Hole x={517} y={949} big /><Hole x={691} y={949} big />
        <Hole x={568} y={658} label="3" /><Hole x={568} y={775} label="2" /><Hole x={568} y={889} label="1" />
        <Box x={481} y={563} w={246} h={422} c="#a04fe0" />
        <path d="M481 563v60M481 563h60M727 563v70M727 985v-72M560 985H727" stroke="#ff26e2" strokeWidth="3" />
        <path d="M528 568h24M528 979h24M680 979h14M509 640v8M704 640v8" stroke="#f2eda1" strokeWidth="4" />
        <path d="M536 746l14 4M566 858l10-8M573 916l12 10" stroke="#e0322c" strokeWidth="7" />

        {/* barrel jack */}
        <T x={382} y={1515} s={46} r>Barrel_Jack_Switch</T>
        <Box x={55} y={1160} w={408} h={350} />
        <Box x={67} y={1187} w={385} h={296} c="#9db1b5" k={4} />
        <Mirror x={131} y={1240} s={41}>Bread board</Mirror>
        <Mirror x={179} y={1222} s={41} c="#b19fb9">Power supply</Mirror>
        <Slot x={217} y={1203} w={112} h={72} /><Slot x={217} y={1465} w={112} h={72} />
        <Slot x={245} y={1334} w={70} h={108} />
        <text x="182" y="1222" fontSize="56" fontFamily={BOLD} fill="#c3cee0">MP</text>
        <text x="182" y="1484" fontSize="56" fontFamily={BOLD} fill="#c3cee0">MP</text>
        <T x={240} y={1343} s={32} r c="#c3cee0">2</T><T x={265} y={1376} s={15} r c="#9cb4d8">Net-(D1-A)</T>
        <rect x="380" y="1262" width="80" height="146" rx="6" fill="#000f20" />
        <rect x="388" y="1270" width="66" height="130" fill="#4d7fc4" />
        <rect x="407" y="1290" width="29" height="88" rx="14" fill="#000f20" />
        <T x={414} y={1343} s={32} r c="#c3cee0">1</T><T x={443} y={1390} s={18} r c="#9cb4d8">Net-(D1-A)</T>
        <path d="M458 1302v62" stroke="#f2eda1" strokeWidth="4" />
        <circle cx="158" cy="1333" r="27" fill="#1cc3d6" stroke="#15707f" strokeWidth="4" />
        <T x={501} y={1355} c="#9bb4bd" r>J1</T>
        <T x={173} y={1528}>Conn_02x02_Counter_</T>
        <T x={815} y={1528} c="#b4b7bb">se</T>

        {/* D6, R2 */}
        <Pad x={570} y={1146} w={78} h={38} /><Pad x={570} y={1228} w={78} h={38} />
        <Box x={578} y={1157} w={68} h={98} c="#7d9dc3" /><Box x={563} y={1139} w={92} h={131} c="#8aa5b0" />
        <path d="M563 1180V1139H655V1180" stroke="#9a5ad2" strokeWidth="3" />
        <T x={622} y={1226} s={36} r>D6</T><T x={687} y={1241} r>LED</T><T x={724} y={1222} r c="#aebdab">D6</T>
        <T x={604} y={1162} s={20} c="#a79cc4">2</T><T x={573} y={1179} s={12} c="#a79cc4">Net-(D6-A)</T>
        <T x={604} y={1244} s={20} c="#a79cc4">1</T><T x={600} y={1261} s={18} c="#a79cc4">V-</T>
        <T x={518} y={1368}>560</T>
        <Pad x={501} y={1380} w={36} h={51} /><Pad x={582} y={1380} w={36} h={51} />
        <path d="M538 1380H580M538 1432H580" stroke="#8aa5b0" strokeWidth="3" />
        <Box x={493} y={1372} w={132} h={66} />
        <T x={534} y={1420}>R2</T><T x={534} y={1473} c="#9bb4bd">R2</T>

        {/* J2 */}
        <Box x={733} y={1372} w={181} h={176} />
        <path d="M787 1498H862" stroke="#4d7fc4" strokeWidth="10" />
        <Box x={748} y={1385} w={151} h={152} c="#9db1b5" />
        <text x="634" y="1544" fontSize="70" fontWeight="700" fontFamily={BOLD} fill="#86a3b4">GND</text>
        <text x="717" y="1430" fontSize="66" fontWeight="700" fontFamily={BOLD} fill="#86a3b4" transform="rotate(-90 717 1430)">5V</text>
        <T x={693} y={1461} c="#9bb4bd">J2</T>
        <SquarePad x={787} y={1423} />
        <Hole x={863} y={1423} label="2" /><Hole x={787} y={1498} label="3" /><Hole x={863} y={1498} label="4" />
        <path d="M818 1423h16M742 1412l12 12" stroke="#e0322c" strokeWidth="6" />

        <Cross x={232} y={149} /><Cross x={514} y={133} /><Cross x={307} y={391} /><Cross x={556} y={286} /><Cross x={631} y={406} />
        <Cross x={220} y={619} /><Cross x={220} y={769} /><Cross x={250} y={865} /><Cross x={220} y={919} /><Cross x={220} y={1069} />
        <Cross x={568} y={889} /><Cross x={421} y={1333} /><Cross x={610} y={1204} /><Cross x={559} y={1406} />
      </g>
    </svg>
  );
}

/* ---------- right-hand panels ---------- */

const layers: [string, string][] = [
  ["F.Cu", "bg-[#c83434]"], ["B.Cu", "bg-[#4d7fc4]"], ["F.Adhesive", "bg-[#840084]"], ["B.Adhesive", "bg-[#000084]"],
  ["F.Paste", "bg-[#a5948d]"], ["B.Paste", "bg-[#00b2b0]"], ["F.Silkscreen", "bg-[#f2eda1]"], ["B.Silkscreen", "bg-[#e8b2a7]"],
  ["F.Mask", "bg-[repeating-conic-gradient(#5a2a68_0_25%,#6d3d7b_0_50%)] bg-size-[11px_11px]"],
  ["B.Mask", "bg-[repeating-conic-gradient(#02665d_0_25%,#177a70_0_50%)] bg-size-[11px_11px]"],
  ["User.Drawings", "bg-[#c2c2c2]"], ["User.Comments", "bg-[#5994dc]"], ["User.Eco1", "bg-[#b4dbd2]"], ["User.Eco2", "bg-[#d8c852]"],
  ["Edge.Cuts", "bg-[#d0d2cd]"], ["Margin", "bg-[#ff26e2]"], ["F.Courtyard", "bg-[#ff26e2]"], ["B.Courtyard", "bg-[#26e9ff]"],
  ["F.Fab", "bg-[#afafaf]"], ["B.Fab", "bg-[#585d84]"],
];

const Eye = () => (
  <svg width="16" height="16" viewBox="0 0 16 16" aria-hidden="true">
    <circle cx="8" cy="8" r="8" fill="#545454" />
    <path d="M1 8c3.500-5 10.500-5 14 0-3.500 5-10.500 5-14 0z" fill="#fff" />
    <circle cx="8" cy="8" r="2.300" fill="#fff" stroke="#545454" strokeWidth="1.300" />
  </svg>
);

function Check({ label, on, size = "text-xs" }: { label: string; on?: boolean; size?: string }) {
  return (
    <label className={`flex h-5 items-center gap-[3px] whitespace-nowrap ${size}`}>
      <span className="relative flex h-4 w-4">
        <input
          type="checkbox"
          defaultChecked={on}
          className="h-4 w-4 appearance-none rounded-[3px] border border-[#5f5f5f] bg-[#f6f6f6] checked:border-[#005fb8] checked:bg-[#005fb8]"
        />
        {on && (
          <svg width="16" height="16" fill="none" className="pointer-events-none absolute inset-0" aria-hidden="true">
            <path d="M4 8.500l2.700 2.700L12 5.500" stroke="#fff" strokeWidth="1.200" />
          </svg>
        )}
      </span>
      {label}
    </label>
  );
}

const filters: [string, boolean][] = [
  ["All items", true], ["Locked items", false], ["Footprints", true], ["Text", true], ["Tracks", true], ["Vias", true],
  ["Pads", true], ["Graphics", true], ["Zones", true], ["Rule Areas", true], ["Dimensions", true], ["Other items", true], ["Points", true],
];

const PanelTitle = ({ children }: Kids) => (
  <div className="flex h-[26px] shrink-0 items-center justify-between bg-[#bababa] px-1 text-sm">{children}</div>
);

function RightPanel() {
  return (
    <aside className="flex w-[250px] shrink-0 flex-col">
      <PanelTitle><h2>Appearance</h2></PanelTitle>
      <div role="tablist" className="flex items-end pt-[5px] text-sm">
        <button role="tab" className="z-10 -mb-px h-[29px] w-[63px] border border-b-0 border-[#e2e2e2] bg-[#f9f9f9] pr-[5px] pb-1">Layers</button>
        <button role="tab" className="h-[26px] w-[60px] border border-l-0 border-b-0 border-[#e2e2e2] bg-[#f3f3f3]">Objects</button>
        <button role="tab" className="h-[26px] w-[58px] border border-l-0 border-b-0 border-[#e2e2e2] bg-[#f3f3f3] pr-3">Nets</button>
      </div>
      <div className="mr-[3px] border border-[#e2e2e2] bg-[#f9f9f9] pl-[3px]">
        <ul className="bg-[#f0f0f0] pt-px pb-5">
          {layers.map(([name, color]) => (
            <li key={name} className={`flex h-5 items-center text-xs ${name === "B.Cu" ? "bg-[#e1e1e1]" : ""}`}>
              <span className="flex w-[19px] justify-end pr-[6px]">
                {name === "B.Cu" && <svg width="6" height="11" aria-hidden="true"><path d="M0 0l6 5.500L0 11z" fill="#3b3bff" /></svg>}
              </span>
              <span className={`h-4 w-4 ${color}`} />
              <button aria-label={`Toggle ${name}`} className="mr-[5px] ml-[6px]"><Eye /></button>
              {name}
            </li>
          ))}
        </ul>
        <button className="flex h-[29px] items-center gap-[3px] pl-[13px] text-xs text-[#777]">
          <svg width="5" height="9" aria-hidden="true"><path d="M0 0l5 4.500L0 9z" fill="#555" /></svg>
          Layer Display Options
        </button>
      </div>
      <div className="flex flex-col px-[7px] pt-3 text-xs">
        <label htmlFor="presets" className="flex h-5 items-center">Presets (Ctrl+Tab):</label>
        <Pick id="presets" label="Presets" value="---" box="h-[28px] w-full" />
        <label htmlFor="viewports" className="flex h-6 items-center">Viewports (Shift+Tab):</label>
        <Pick id="viewports" label="Viewports" value="---" box="h-[28px] w-full" />
      </div>
      <div className="mt-[6px] h-[5px] bg-[#dcdcdc]" />
      <PanelTitle><h2>Selection Filter</h2></PanelTitle>
      <div className="grid grid-cols-[105px_1fr] pt-[5px] pl-[5px]">
        {filters.map(([label, on]) => <Check key={label} label={label} on={on} />)}
      </div>
    </aside>
  );
}

/* ---------- window ---------- */

const counts: [string, string, string][] = [
  ["Pads", "47", "w-[69px]"], ["Vias", "0", "w-[65px]"], ["Track Segments", "109", "w-[142px]"], ["Nets", "9", "w-[68px]"], ["Unrouted", "0", "w-[80px]"],
];

export default function App() {
  return (
    <div className="flex min-h-screen flex-col overflow-hidden bg-[#f0f0f0] font-['Open_Sans','Noto_Sans',sans-serif] text-sm text-black">
      <nav className="flex h-[19px] items-center gap-[18px] bg-white pl-[10px] text-[#6d6d6d]">
        {["File", "Edit", "View", "Place", "Route", "Inspect", "Tools", "Preferences", "Help"].map((m) => (
          <button key={m} className="pb-[2px] leading-[17px]">{m}</button>
        ))}
      </nav>

      <div className="flex h-[48px] items-center pl-1">
        {topTools.map((t, k) => (t ? <TopButton key={t.n} n={t.n} i={t.i} /> : <VSep key={k} />))}
        <Pick id="preset" label="Preset" value="< Default >" box="ml-[2px] h-[28px] w-[110px]" />
        <VSep />
        <TopButton n="Scripting Console" i={Console} />
        <VSep />
        <div className="relative flex w-[42px] justify-center">
          <button aria-label="Fabrication Toolkit"><Fab /></button>
          <svg width="72" height="76" className="pointer-events-none absolute -top-[26px] -left-[10px]" fill="none" aria-hidden="true">
            <ellipse cx="36" cy="37" rx="33" ry="35" stroke="#ed1c24" strokeWidth="5" />
          </svg>
        </div>
        <svg width="48" height="46" viewBox="0 0 48 46" fill="none" className="-mt-6 ml-[25px] shrink-0" aria-hidden="true">
          <path d="M4 23L23 6v10h21v17H23v9z" stroke="#ed1c24" strokeWidth="5" />
        </svg>
        <p className="-mt-4 ml-5 text-[31px] leading-8 font-semibold whitespace-nowrap">Fabrication Toolkit</p>
      </div>

      <div className="flex h-[42px] items-center pb-[2px] pl-[6px]">
        <Pick id="track" label="Track width" value="Track: use netclass width" box="h-[28px] w-[193px]" />
        <button aria-label="Use existing track width" className="ml-[3px] flex h-[38px] w-[38px] items-center justify-center border border-[#0078d7] bg-[#b3d5f3]"><TrackPos /></button>
        <VSep />
        <Pick id="via" label="Via size" value="Via: use netclass sizes" box="ml-[3px] h-[28px] w-[186px]" />
        <VSep />
        <Pick id="layer" label="Active layer" value="B.Cu (PgDn)" box="ml-[3px] h-[26px] w-[159px]" dark swatch />
        <button aria-label="Layer pair" className="ml-[6px]"><LayerPair /></button>
        <div className="ml-[3px]"><VSep /></div>
        <Pick id="grid" label="Grid" value="0.5000 mm (19.69 mils)" box="ml-[3px] h-[28px] w-[209px]" />
        <VSep />
        <Pick id="zoom" label="Zoom" value="Zoom 2.20" box="ml-[3px] h-[28px] w-[119px]" />
        <VSep />
        <div className="ml-[3px]"><Check label="Override locks" size="text-sm" /></div>
      </div>

      <main className="flex flex-1">
        <aside className="flex w-[375px] shrink-0 flex-col">
          <PanelTitle>
            <h2>Properties</h2>
            <button aria-label="Close" className="pr-[3px]">
              <svg width="11" height="11" fill="none"><path d="M1 1l9 9M10 1l-9 9" stroke="#000" strokeWidth="2" /></svg>
            </button>
          </PanelTitle>
          <p className="flex h-[31px] items-center pl-1">No objects selected</p>
          <div className="flex-1 border border-[#a3a3ab] bg-white" />
        </aside>
        <div className="w-[5px] shrink-0 bg-[#dcdcdc]" />
        <SideBar tools={leftTools} />
        <section className="relative min-w-0 flex-1 overflow-hidden border border-[#a0a0a0] bg-[#001020]"><Board /></section>
        <SideBar tools={rightTools}>
          <button aria-label="More tools" className="flex flex-1 items-center pt-2 text-lg leading-none text-[#6f6fa8]">»</button>
        </SideBar>
        <div className="w-[5px] shrink-0 bg-[#dcdcdc]" />
        <RightPanel />
      </main>

      <dl className="flex h-[40px] pl-[14px] pt-px text-[#6d6d6d]">
        {counts.map(([k, v, w]) => (
          <div key={k} className={w}>
            <dt className="leading-5 whitespace-nowrap">{k}</dt>
            <dd className="leading-5">{v}</dd>
          </div>
        ))}
      </dl>
      <footer className="flex h-[28px] items-center border-t border-[#d7d7d7] pt-px pl-[2px] whitespace-pre">
        <span className="w-[183px]">File 'C:\Users\sagar\Desk...</span>
        <span className="w-[181px]">Z 2.71</span>
        <span className="w-[72px]">X 25.0000</span>
        <span className="w-[109px]">Y 80.0000</span>
        <span className="w-[79px]">dx 25.0000</span>
        <span className="w-[79px]">dy 80.0000</span>
        <span className="w-[24px]">...</span>
        <span className="w-[182px]">grid 0.5000</span>
        <span>mm</span>
      </footer>
    </div>
  );
}
